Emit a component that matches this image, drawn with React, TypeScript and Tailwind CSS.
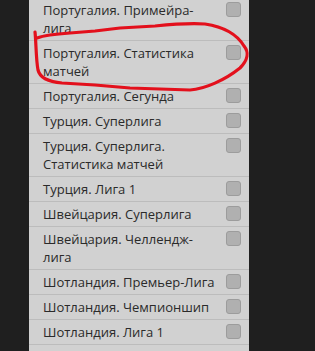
const leagues = [
  'Португалия. Примейра-лига',
  'Португалия. Статистика матчей',
  'Португалия. Сегунда',
  'Турция. Суперлига',
  'Турция. Суперлига. Статистика матчей',
  'Турция. Лига 1',
  'Швейцария. Суперлига',
  'Швейцария. Челлендж-лига',
  'Шотландия. Премьер-Лига',
  'Шотландия. Чемпионшип',
  'Шотландия. Лига 1',
];

export default function App() {
  return (
    <div
      className="relative w-[315px] h-[351px] overflow-hidden bg-[#1f1f1f]"
      style={{ fontFamily: '"Open Sans", "Noto Sans", sans-serif' }}
    >
      {/* list panel, scrolled a little */}
      <div className="ml-[29px] -mt-[2px] w-[220px] bg-[#d1d1d1] pb-[20px]">
        {leagues.map(name => (
          <div
            key={name}
            className="flex items-start justify-between pl-[14px] pr-[8px] py-[3px] border-b border-[#bcbcbc]"
          >
            <span className="w-[178px] text-[13px] leading-[18px] text-[#2a2a2a]">{name}</span>
            <span className="mt-[1px] w-[15px] h-[15px] shrink-0 rounded-[3px] bg-[#b0b0b0] border border-[#9c9c9c]" />
          </div>
        ))}
      </div>

      {/* hand-drawn red mark */}
      <svg className="absolute left-0 top-0" width="315" height="351" viewBox="0 0 315 351" fill="none">
        <path
          d="M35 32 C36 40 36 60 38 70 C40 78 50 82 62 83 L95 85 L130 88 L190 90 C205 89 225 80 240 68 C248 60 249 52 244 46 C238 36 225 27 205 24 C190 23 175 24 155 26 L120 28 L95 31 L70 33 C55 34 45 35 37 38"
          stroke="#e3101c"
          strokeWidth="3.2"
          strokeLinecap="round"
          strokeLinejoin="round"
        />
      </svg>
    </div>
  );
}
